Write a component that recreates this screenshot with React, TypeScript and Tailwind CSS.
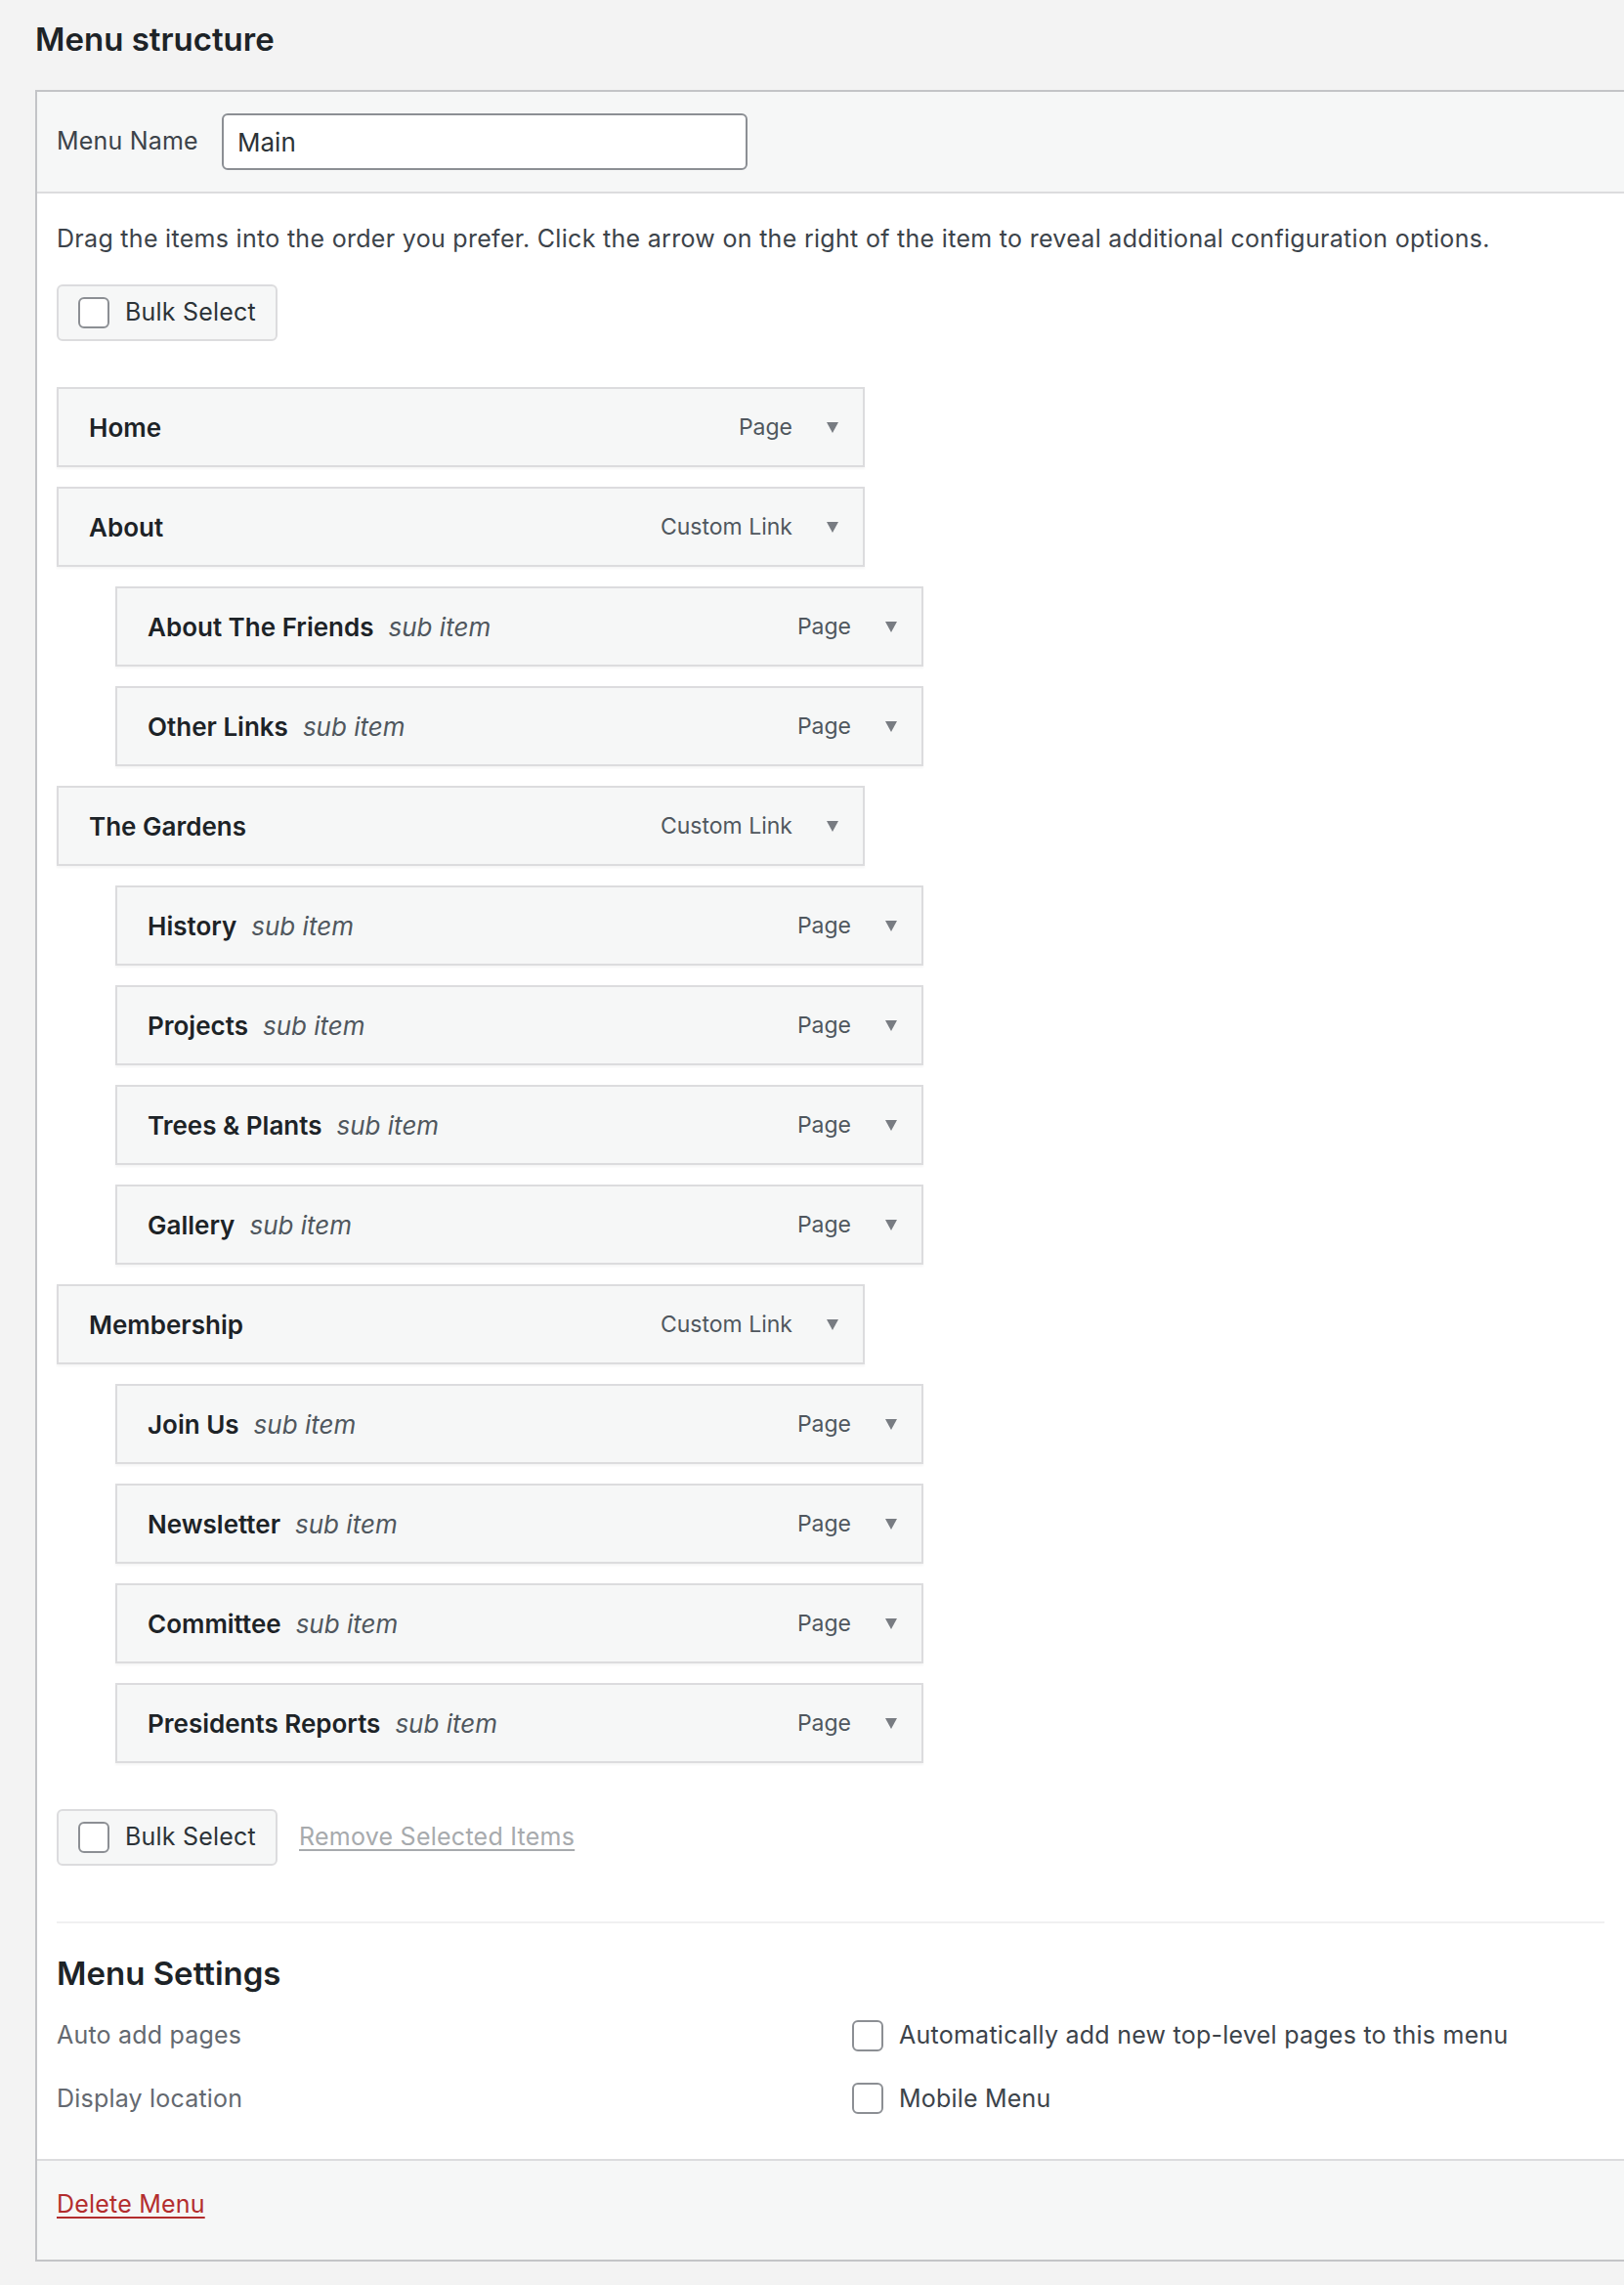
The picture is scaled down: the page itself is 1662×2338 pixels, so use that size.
import React from "react";

type Item = { title: string; type: string; sub?: boolean };

const items: Item[] = [
  { title: "Home", type: "Page" },
  { title: "About", type: "Custom Link" },
  { title: "About The Friends", type: "Page", sub: true },
  { title: "Other Links", type: "Page", sub: true },
  { title: "The Gardens", type: "Custom Link" },
  { title: "History", type: "Page", sub: true },
  { title: "Projects", type: "Page", sub: true },
  { title: "Trees & Plants", type: "Page", sub: true },
  { title: "Gallery", type: "Page", sub: true },
  { title: "Membership", type: "Custom Link" },
  { title: "Join Us", type: "Page", sub: true },
  { title: "Newsletter", type: "Page", sub: true },
  { title: "Committee", type: "Page", sub: true },
  { title: "Presidents Reports", type: "Page", sub: true },
];

function Checkbox() {
  return (
    <span className="block h-[32px] w-[32px] shrink-0 rounded-[6px] border-2 border-[#8c8f94] bg-white" />
  );
}

function BulkSelect() {
  return (
    <div className="flex h-[58px] w-[226px] items-center gap-[16px] rounded-[6px] border-2 border-[#dcdcde] bg-[#f6f7f7] pl-[20px]">
      <Checkbox />
      <span className="text-[25px] tracking-[0.2px] text-[#2c3338]">Bulk Select</span>
    </div>
  );
}

function Arrow() {
  return (
    <svg width="12" height="11" viewBox="0 0 12 11" className="shrink-0">
      <polygon points="0,0 12,0 6,11" fill="#787c82" />
    </svg>
  );
}

function MenuItem({ item }: { item: Item }) {
  return (
    <div
      className={
        "flex h-[82px] w-[827px] items-center border-2 border-[#dcdcde] bg-[#f6f7f7] pl-[31px] pr-[25px] shadow-[0_2px_2px_rgba(0,0,0,0.04)] " +
        (item.sub ? "ml-[60px]" : "")
      }
    >
      <span className="text-[26px] font-semibold text-[#1d2327]">{item.title}</span>
      {item.sub && <span className="ml-[15px] text-[26px] italic text-[#50575e]">sub item</span>}
      <span className="ml-auto text-[23px] text-[#50575e]">{item.type}</span>
      <span className="ml-[35px]">
        <Arrow />
      </span>
    </div>
  );
}

export default function App() {
  return (
    <div className="min-h-screen overflow-hidden bg-[#f3f3f3] pb-[24px] font-['Inter',sans-serif] text-[#3c434a]">
      <h2 className="ml-[36px] pt-[20px] text-[33px] font-semibold leading-[40px] text-[#1d2327]">
        Menu structure
      </h2>

      <div className="ml-[36px] mt-[32px] border-y-2 border-l-2 border-[#c3c4c7] bg-white">
        <div className="flex items-center border-b-2 border-[#dcdcde] bg-[#f6f7f7] px-[20px] py-[22px]">
          <span className="w-[169px] text-[25px] tracking-[0.2px] text-[#3c434a]">Menu Name</span>
          <div className="flex h-[58px] w-[538px] items-center rounded-[6px] border-2 border-[#8c8f94] bg-white px-[14px] text-[26px] text-[#2c3338]">
            Main
          </div>
        </div>

        <div className="px-[20px] pt-[28px]">
          <p className="text-[25px] leading-[37px] tracking-[0.3px] text-[#3c434a]">
            Drag the items into the order you prefer. Click the arrow on the right of the item to reveal additional configuration options.
          </p>
          <div className="mt-[28px]">
            <BulkSelect />
          </div>

          <div className="mt-[47px] flex flex-col gap-[20px]">
            {items.map((it) => (
              <MenuItem key={it.title} item={it} />
            ))}
          </div>

          <div className="mt-[47px] flex items-center gap-[22px]">
            <BulkSelect />
            <a className="text-[25px] tracking-[0.25px] text-[#a7aaad] underline underline-offset-[4px]">
              Remove Selected Items
            </a>
          </div>

          <div className="mt-[57px] border-t-2 border-[#f0f0f1] pt-[31px] pb-[43px]">
            <h3 className="text-[33px] font-semibold leading-[40px] text-[#1d2327]">Menu Settings</h3>
            <div className="mt-[25px] flex flex-col gap-[27px]">
              <div className="flex items-center">
                <span className="w-[814px] text-[25px] tracking-[0.2px] text-[#646970]">Auto add pages</span>
                <Checkbox />
                <span className="ml-[16px] text-[25px] tracking-[0.25px] text-[#3c434a]">
                  Automatically add new top-level pages to this menu
                </span>
              </div>
              <div className="flex items-center">
                <span className="w-[814px] text-[25px] tracking-[0.2px] text-[#646970]">Display location</span>
                <Checkbox />
                <span className="ml-[16px] text-[25px] tracking-[0.2px] text-[#3c434a]">Mobile Menu</span>
              </div>
            </div>
          </div>
        </div>

        <div className="border-t-2 border-[#dcdcde] bg-[#f6f7f7] px-[20px] pt-[26px] pb-[37px]">
          <a className="text-[25px] tracking-[0.2px] text-[#b32d2e] underline underline-offset-[4px]">Delete Menu</a>
        </div>
      </div>
    </div>
  );
}
